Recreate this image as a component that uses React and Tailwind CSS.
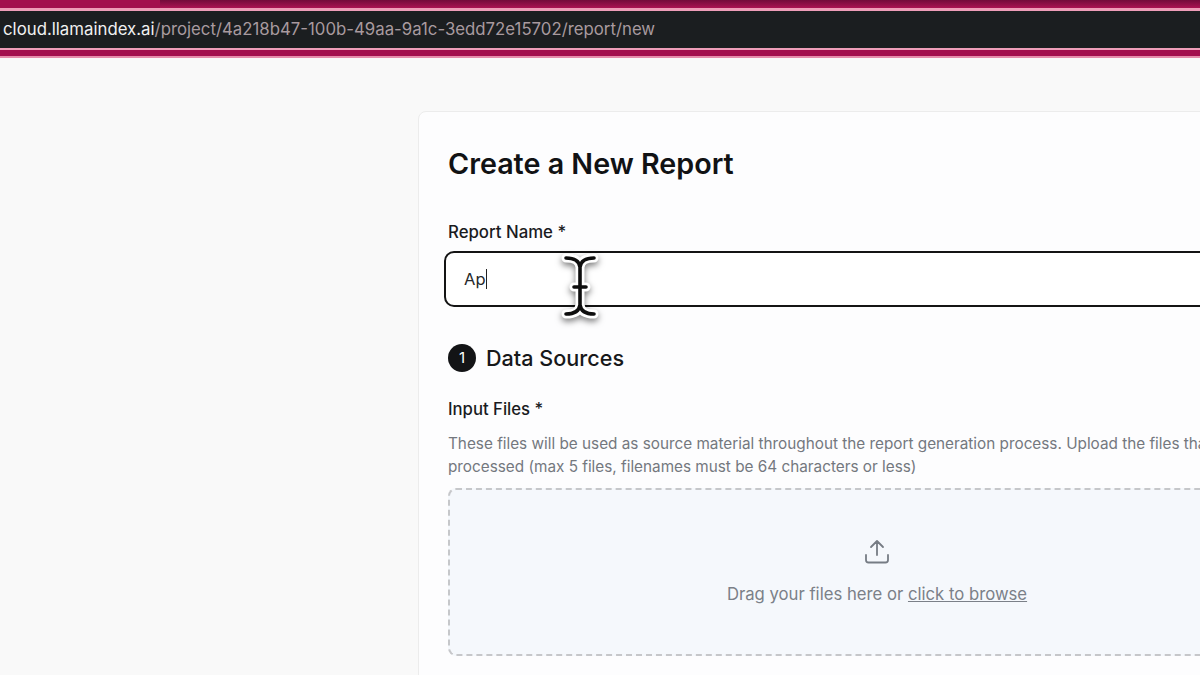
import React from 'react';

const font = { fontFamily: 'Inter, sans-serif' };

const beamPath = 'M8 9c8 0 13 2 14 9 1-7 6-9 14-9M22 18v38M8 65c8 0 13-2 14-9 1 7 6 9 14 9M16 38h12';

const IBeam = () => (
    <svg width="44" height="74" viewBox="0 0 44 74" fill="none" className="absolute left-[558px] top-[249px] drop-shadow-[0_3px_3px_rgba(0,0,0,0.5)]">
        <path d={beamPath} stroke="#fff" strokeWidth="9" strokeLinecap="round" />
        <path d={beamPath} stroke="#0d0d0d" strokeWidth="3.6" strokeLinecap="round" />
    </svg>
);

const UploadIcon = () => (
    <svg width="26" height="26" viewBox="0 0 26 26" fill="none" stroke="#767c84" strokeWidth="1.8" strokeLinecap="round" strokeLinejoin="round">
        <path d="M13 16V2M7 8l6-6 6 6M2 16v5c0 1.600 1 2.500 2.500 2.500h17c1.500 0 2.500-.9 2.500-2.500v-5" />
    </svg>
);

const App = () => {
    return (
        <div className="w-[1200px] h-[675px] overflow-hidden relative bg-[#f9f9f9] flex flex-col" style={font}>
            <div className="h-[58px] shrink-0 flex flex-col bg-[#a30f4e]">
                <div className="h-[8px] flex">
                    <div className="w-[160px] bg-[#a30f4e]" />
                    <div className="flex-1 bg-gradient-to-b from-[#730a3a] to-[#ab1252]" />
                </div>
                <div className="h-[3px] bg-[#ee9db8]" />
                <div className="h-[37px] bg-[#1b1e20] flex items-center pl-[3px] text-[16.8px] whitespace-nowrap">
                    <span className="text-[#f0f0f0]">cloud.llamaindex.ai</span>
                    <span className="text-[#a89a9f]">/project/4a218b47-100b-49aa-9a1c-3edd72e15702/report/new</span>
                </div>
                <div className="h-[2px] bg-[#ee9db8]" />
                <div className="h-[6px] bg-[#a30f4e]" />
                <div className="h-[2px] bg-[#e58cab]" />
            </div>

            <div className="flex-1 pl-[418px] pt-[53px]">
                <div className="w-[900px] h-[700px] bg-[#fdfdfe] border border-[#ececec] rounded-[8px] pl-[29px] pt-[33px]">
                    <h1 className="text-[28.7px] leading-[38px] font-semibold text-[#111214]">Create a New Report</h1>

                    <label className="block mt-[37px] text-[16.8px] leading-[24px] font-medium text-[#1a1b1e]">Report Name *</label>
                    <div className="mt-[7px] -ml-[4px] w-[840px] h-[56px] border-2 border-[#141414] rounded-[10px] bg-white flex items-center pl-[18px] text-[16.5px] text-[#26282b]">
                        Ap<span className="w-px h-[20px] bg-[#222]" />
                    </div>

                    <div className="mt-[37px] flex items-center gap-[10px]">
                        <span className="w-[28px] h-[28px] rounded-full bg-[#131416] text-white text-[15px] flex items-center justify-center">1</span>
                        <h2 className="text-[21.6px] leading-[28px] font-medium text-[#17181a]">Data Sources</h2>
                    </div>

                    <label className="block mt-[25px] text-[16.7px] leading-[24px] font-medium text-[#1a1b1e]">Input Files *</label>
                    <p className="mt-[11px] text-[15.3px] leading-[23px] text-[#74787e] w-[780px] whitespace-nowrap">
                        These files will be used as source material throughout the report generation process. Upload the files that need to be
                        <br />
                        processed (max 5 files, filenames must be 64 characters or less)
                    </p>

                    <div className="mt-[10px] w-[900px] h-[168px] bg-[#f5f8fc] border-2 border-dashed border-[#c6c7ca] rounded-[8px] flex flex-col items-center pt-[49px] pr-[42px]">
                        <UploadIcon />
                        <p className="mt-[17px] text-[16.7px] leading-[24px] text-[#7b8088]">
                            Drag your files here or <span className="underline">click to browse</span>
                        </p>
                    </div>
                </div>
            </div>

            <IBeam />
        </div>
    );
};

export default App;
